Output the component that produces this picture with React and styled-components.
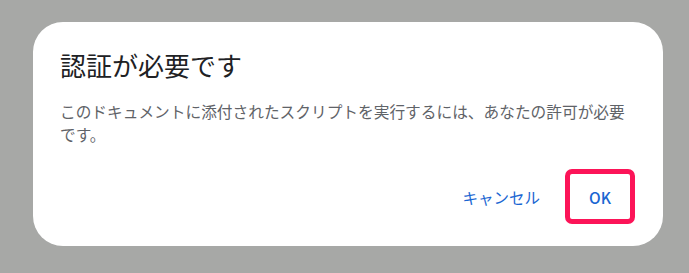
import React from 'react'
import styled, { createGlobalStyle } from 'styled-components'

const GlobalStyle = createGlobalStyle`
    html, body {
        margin: 0;
        padding: 0;
        background: #a7a8a6;
        font-family: "Noto Sans CJK JP", "Noto Sans", sans-serif;
    }
`

const Backdrop = styled.div`
    width: 689px;
    height: 273px;
    padding: 22px 0 0 33px;
    box-sizing: border-box;
`

const Dialog = styled.div`
    width: 630px;
    height: 224px;
    background: #fff;
    border-radius: 30px;
    box-sizing: border-box;
    padding: 28px 27px 0 27px;
    display: flex;
    flex-direction: column;
`

const Title = styled.h2`
    margin: 0;
    font-size: 26px;
    font-weight: 400;
    line-height: 30px;
    color: #202124;
`

const Message = styled.p`
    margin: 20px 0 0;
    font-size: 15.7px;
    line-height: 23px;
    color: #5f6368;
`

const Actions = styled.div`
    display: flex;
    justify-content: flex-end;
    align-items: center;
    gap: 16px;
    margin-top: 23px;
    margin-right: 1px;
`

const Button = styled.button`
    font-family: inherit;
    background: #fff;
    color: #1a66d2;
    font-size: 15.5px;
    font-weight: ${p => (p.primary ? 500 : 400)};
    border: ${p => (p.highlight ? '5px solid #fc1458' : '5px solid transparent')};
    border-radius: 7px;
    height: 55px;
    padding: 0 ${p => (p.highlight ? '19px' : '4px')};
    cursor: pointer;
`

export default function App() {
    return (
        <>
            <GlobalStyle />
            <Backdrop>
                <Dialog>
                    <Title>認証が必要です</Title>
                    <Message>このドキュメントに添付されたスクリプトを実行するには、あなたの許可が必要です。</Message>
                    <Actions>
                        <Button>キャンセル</Button>
                        <Button primary highlight>OK</Button>
                    </Actions>
                </Dialog>
            </Backdrop>
        </>
    )
}
